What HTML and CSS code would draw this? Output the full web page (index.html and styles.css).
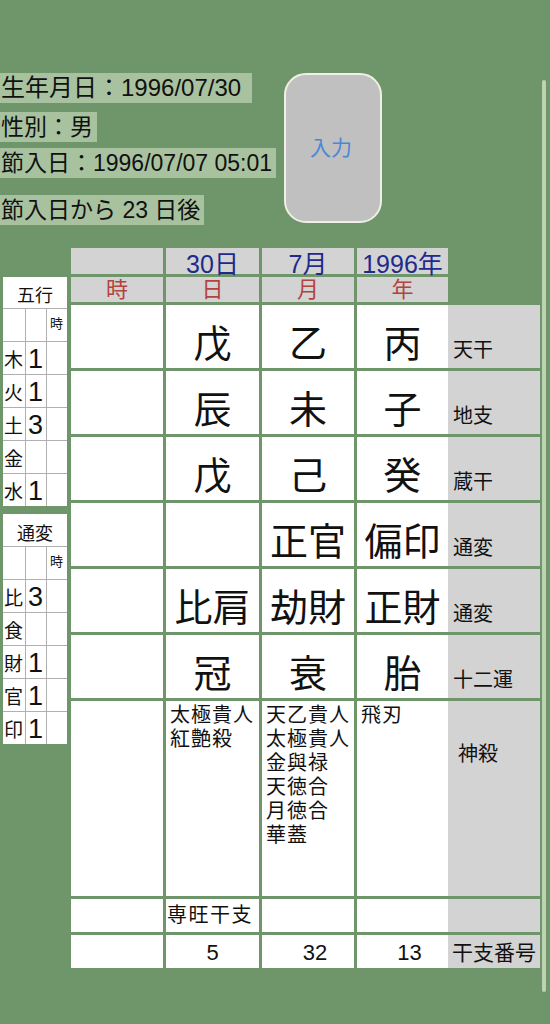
FILE: index.html
```html
<!DOCTYPE html>
<html lang="ja">
<head>
<meta charset="utf-8">
<title>命式</title>
<link rel="stylesheet" href="styles.css">
</head>
<body>
<div class="top">
  <div class="info">
    <div class="line l1"><span class="hl hl-wide">生年月日：1996/07/30</span></div>
    <div class="line l2"><span class="hl">性別：男</span></div>
    <div class="line l3"><span class="hl">節入日：1996/07/07 05:01</span></div>
    <div class="line l4"><span class="hl">節入日から 23 日後</span></div>
  </div>
  <div class="btn"><span class="btn-label">入力</span></div>
</div>
<div class="main">
  <div class="side">
    <div class="mini">
      <div class="mt">五行</div>
      <div class="mc"></div><div class="mc"></div><div class="mc sm">時</div>
      <div class="mc lab">木</div><div class="mc num">1</div><div class="mc"></div>
      <div class="mc lab">火</div><div class="mc num">1</div><div class="mc"></div>
      <div class="mc lab">土</div><div class="mc num">3</div><div class="mc"></div>
      <div class="mc lab">金</div><div class="mc num"></div><div class="mc"></div>
      <div class="mc lab">水</div><div class="mc num">1</div><div class="mc"></div>
    </div>
    <div class="mini mini2">
      <div class="mt">通変</div>
      <div class="mc"></div><div class="mc"></div><div class="mc sm">時</div>
      <div class="mc lab">比</div><div class="mc num">3</div><div class="mc"></div>
      <div class="mc lab">食</div><div class="mc num"></div><div class="mc"></div>
      <div class="mc lab">財</div><div class="mc num">1</div><div class="mc"></div>
      <div class="mc lab">官</div><div class="mc num">1</div><div class="mc"></div>
      <div class="mc lab">印</div><div class="mc num">1</div><div class="mc"></div>
    </div>
  </div>
  <div class="grid">
    <div class="hd"></div>
    <div class="hd blue">30日</div>
    <div class="hd blue">7月</div>
    <div class="hd blue">1996年</div>
    <div class="blank"></div>

    <div class="hd red">時</div>
    <div class="hd red">日</div>
    <div class="hd red">月</div>
    <div class="hd red">年</div>
    <div class="blank"></div>

    <div class="c"></div><div class="c big">戊</div><div class="c big">乙</div><div class="c big">丙</div><div class="lbl">天干</div>
    <div class="c"></div><div class="c big">辰</div><div class="c big">未</div><div class="c big">子</div><div class="lbl">地支</div>
    <div class="c"></div><div class="c big">戊</div><div class="c big">己</div><div class="c big">癸</div><div class="lbl">蔵干</div>
    <div class="c"></div><div class="c big"></div><div class="c big">正官</div><div class="c big">偏印</div><div class="lbl">通変</div>
    <div class="c"></div><div class="c big">比肩</div><div class="c big">劫財</div><div class="c big">正財</div><div class="lbl">通変</div>
    <div class="c"></div><div class="c big">冠</div><div class="c big">衰</div><div class="c big">胎</div><div class="lbl">十二運</div>

    <div class="c"></div>
    <div class="c list">太極貴人<br>紅艶殺</div>
    <div class="c list">天乙貴人<br>太極貴人<br>金與禄<br>天徳合<br>月徳合<br>華蓋</div>
    <div class="c list">飛刃</div>
    <div class="lbl lbl-top">神殺</div>

    <div class="c"></div><div class="c list one">専旺干支</div><div class="c"></div><div class="c"></div><div class="lbl"></div>
    <div class="c"></div><div class="c no">5</div><div class="c no shift">32</div><div class="c no shift">13</div><div class="lbl lbl-mid">干支番号</div>
  </div>
</div>
<div class="scroll"></div>
</body>
</html>
```
FILE: styles.css
```css
html, body {
  margin: 0;
  padding: 0;
}
body {
  width: 550px;
  height: 1024px;
  overflow: hidden;
  background: #6f966a;
  font-family: "Liberation Sans", "Noto Sans CJK JP", sans-serif;
  color: #111;
  position: relative;
}
.top {
  display: flex;
  align-items: flex-start;
  padding-top: 73px;
}
.info {
  width: 284px;
}
.line {
  height: 30px;
}
.l2 { margin-top: 9px; }
.l3 { margin-top: 6px; }
.l4 { margin-top: 17px; }
.hl {
  display: inline-block;
  height: 30px;
  line-height: 30px;
  font-size: 23px;
  background: #a8c2a0;
  padding: 0 4px 0 1px;
  white-space: nowrap;
}
.hl-wide {
  font-size: 24px;
  padding-right: 11px;
}
.btn {
  box-sizing: border-box;
  width: 98px;
  height: 150px;
  border: 2px solid #eef0e6;
  border-radius: 22px;
  background: #c0c0c0;
  color: #4a87d6;
  font-size: 21px;
  display: flex;
  align-items: center;
  justify-content: center;
}
.btn-label {
  margin: 0 4px 4px 0;
}
.main {
  display: flex;
  align-items: flex-start;
  margin-top: 23px;
}
.side {
  width: 64px;
  margin-left: 3px;
  margin-top: 29px;
}
.mini {
  display: grid;
  grid-template-columns: 22px 20px 20px;
  grid-template-rows: 31px 32px repeat(5, 32px);
  gap: 1px;
  background: #b0b0b0;
}
.mini2 {
  margin-top: 8px;
  grid-template-rows: 32px 32px repeat(5, 32px);
}
.mt {
  grid-column: 1 / 4;
  background: #fff;
  font-size: 18px;
  display: flex;
  align-items: flex-end;
  justify-content: center;
  padding-bottom: 2px;
  line-height: 20px;
}
.mc {
  background: #fff;
  display: flex;
  align-items: flex-end;
  line-height: 22px;
}
.sm {
  font-size: 13px;
  align-items: center;
  justify-content: flex-end;
  padding-right: 4px;
  padding-bottom: 2px;
}
.lab {
  font-size: 19px;
  padding-left: 1px;
  padding-bottom: 2px;
}
.num {
  font-size: 27px;
  padding-left: 2px;
  padding-bottom: 2px;
  line-height: 26px;
}
.grid {
  margin-left: 4px;
  display: grid;
  grid-template-columns: 92px 93px 92px 91px 89px;
  grid-template-rows: 26px 25px repeat(6, 63px) 195px 33px 33px;
  gap: 3px;
}
.hd {
  background: #d3d3d3;
  display: flex;
  justify-content: center;
  white-space: nowrap;
}
.blue {
  color: #1f2a8c;
  font-size: 25px;
  line-height: 26px;
  padding-top: 3px;
}
.red {
  color: #b2433e;
  font-size: 22px;
  line-height: 25px;
}
.blank {
  background: transparent;
}
.c {
  background: #fff;
}
.big {
  font-size: 38px;
  line-height: 38px;
  display: flex;
  align-items: flex-end;
  justify-content: center;
  padding-bottom: 5px;
  white-space: nowrap;
}
.list {
  font-size: 20px;
  line-height: 24px;
  letter-spacing: 1px;
  padding: 2px 0 0 4px;
  white-space: nowrap;
}
.one {
  padding: 4px 0 0 1px;
  letter-spacing: 1.5px;
}
.no {
  font-size: 22px;
  display: flex;
  align-items: center;
  justify-content: center;
  padding-top: 3px;
}
.shift {
  padding-left: 14px;
}
.lbl {
  margin-left: -3px;
  background: #d3d3d3;
  font-size: 20px;
  line-height: 20px;
  display: flex;
  align-items: flex-end;
  padding: 0 0 8px 5px;
}
.lbl-top {
  align-items: flex-start;
  padding: 43px 0 0 10px;
}
.lbl-mid {
  align-items: center;
  padding: 3px 0 0 4px;
  font-size: 21px;
  white-space: nowrap;
}
.scroll {
  position: absolute;
  left: 542px;
  top: 80px;
  width: 4px;
  height: 912px;
  border-radius: 2px;
  background: #bcd3b4;
}
```
